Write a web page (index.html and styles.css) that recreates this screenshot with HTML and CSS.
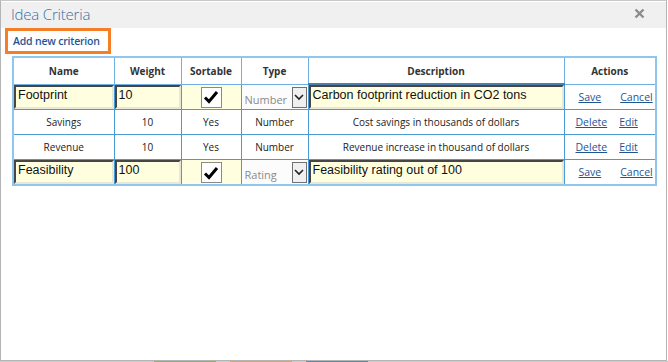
FILE: index.html
```html
<!DOCTYPE html>
<html>

<head>
  <title>Idea Criteria</title>
  <link rel="stylesheet" href="styles.css">
</head>

<body>
  <div class="dialog">
    <div class="titlebar">
      <span class="title">Idea Criteria</span>
      <span class="close"><svg width="11" height="11" viewBox="0 0 11 11"><path d="M1.5 1.5 L9.5 9.5 M9.5 1.5 L1.5 9.5" stroke="#8c8c8c" stroke-width="2.4"/></svg></span>
    </div>
    <div class="content">
      <a class="addnew" href="#">Add new criterion</a>
      <table class="criteria">
        <colgroup>
          <col style="width: 101px">
          <col style="width: 67px">
          <col style="width: 60px">
          <col style="width: 67px">
          <col style="width: 256px">
          <col style="width: 92px">
        </colgroup>
        <tr>
          <th>Name</th>
          <th>Weight</th>
          <th>Sortable</th>
          <th>Type</th>
          <th>Description</th>
          <th>Actions</th>
        </tr>
        <tr class="edit">
          <td><div class="field">Footprint</div></td>
          <td><div class="field">10</div></td>
          <td class="yellow"><span class="check"><svg width="16" height="14" viewBox="0 0 16 14"><path d="M2 7.5 L6 11.5 L14 2" fill="none" stroke="#000" stroke-width="3"/></svg></span></td>
          <td><div class="select"><span>Number</span><span class="drop"><svg width="10" height="7" viewBox="0 0 10 7"><path d="M1 1 L5 5 L9 1" fill="none" stroke="#222" stroke-width="1.6"/></svg></span></div></td>
          <td><div class="field">Carbon footprint reduction in CO2 tons</div></td>
          <td class="actions"><a href="#">Save</a><a href="#">Cancel</a></td>
        </tr>
        <tr>
          <td>Savings</td>
          <td>10</td>
          <td>Yes</td>
          <td>Number</td>
          <td>Cost savings in thousands of dollars</td>
          <td class="actions"><a href="#">Delete</a><a href="#">Edit</a></td>
        </tr>
        <tr>
          <td>Revenue</td>
          <td>10</td>
          <td>Yes</td>
          <td>Number</td>
          <td>Revenue increase in thousand of dollars</td>
          <td class="actions"><a href="#">Delete</a><a href="#">Edit</a></td>
        </tr>
        <tr class="edit">
          <td><div class="field">Feasibility</div></td>
          <td><div class="field">100</div></td>
          <td class="yellow"><span class="check"><svg width="16" height="14" viewBox="0 0 16 14"><path d="M2 7.5 L6 11.5 L14 2" fill="none" stroke="#000" stroke-width="3"/></svg></span></td>
          <td><div class="select"><span>Rating</span><span class="drop"><svg width="10" height="7" viewBox="0 0 10 7"><path d="M1 1 L5 5 L9 1" fill="none" stroke="#222" stroke-width="1.6"/></svg></span></div></td>
          <td><div class="field">Feasibility rating out of 100</div></td>
          <td class="actions"><a href="#">Save</a><a href="#">Cancel</a></td>
        </tr>
      </table>
    </div>
  </div>
  <div class="taskbar">
    <span class="tab green"></span>
    <span class="tab orange"></span>
    <span class="tab blue"></span>
  </div>
</body>

</html>
```

FILE: styles.css
```css
body {
  margin: 0;
  background-color: #ffffff;
  font-family: "Open Sans", "Noto Sans", sans-serif;
}

.dialog {
  width: 665px;
  height: 359px;
  border: 1px solid #b4b4b4;
  border-top-color: #c8c8c8;
  display: flex;
  flex-direction: column;
}

.titlebar {
  height: 26px;
  margin-top: 1px;
  background-color: #f0f0f0;
  display: flex;
  align-items: center;
  justify-content: space-between;
  padding: 0 21px 0 10px;
}

.title {
  font-size: 15px;
  color: #3a6ea5;
  font-weight: 300;
  letter-spacing: -0.2px;
  margin-top: -3px;
}

.close {
  display: flex;
  margin-top: -4px;
}

.content {
  display: flex;
  flex-direction: column;
  align-items: flex-start;
  padding-left: 4px;
}

.addnew {
  display: block;
  width: 95px;
  height: 20px;
  line-height: 20px;
  border: 3px solid #f57e26;
  padding-left: 5px;
  font-size: 10.5px;
  font-weight: 600;
  color: #1f5595;
  text-decoration: none;
  letter-spacing: -0.2px;
  white-space: nowrap;
}

.criteria {
  margin: 2px 0 0 7px;
  border-collapse: collapse;
  table-layout: fixed;
  width: 643px;
  border: 2px solid #8ec6ec;
  font-size: 10px;
  color: #222;
}

.criteria th,
.criteria td {
  border: 1px solid #4a9ad6;
  height: 24px;
  padding: 0;
  text-align: center;
  white-space: nowrap;
  overflow: hidden;
}

.criteria th {
  height: 25px;
  font-weight: 700;
  color: #333;
  border-color: #6fb0e2;
}

.criteria th:nth-child(5) {
  border-bottom: 2px solid #4a7fae;
}

.edit td {
  vertical-align: top;
}

.field {
  height: 20px;
  border: 2px inset #9a9a9a;
  border-right-color: #e8e8d8;
  border-bottom-color: #e8e8d8;
  background-color: #ffffe0;
  font-family: "Liberation Sans", Arial, sans-serif;
  font-size: 12.5px;
  text-align: left;
  padding-left: 2px;
  line-height: 16px;
  color: #111;
}

.yellow {
  background-color: #ffffe0;
}

.check {
  display: inline-flex;
  align-items: center;
  justify-content: center;
  width: 21px;
  height: 21px;
  margin-top: 2px;
  background-color: #fff;
  border: 1px solid #8a8a8a;
  box-sizing: border-box;
}

.select {
  display: flex;
  justify-content: space-between;
  align-items: flex-end;
  height: 24px;
  background-color: #fcfcfc;
  color: #8a8a8a;
  font-size: 11px;
  padding: 0 1px 0 3px;
}

.select span:first-child {
  padding-bottom: 2px;
}

.drop {
  display: flex;
  align-items: center;
  justify-content: center;
  width: 15px;
  height: 21px;
  margin-bottom: 1px;
  background-color: #f0f0f0;
  border: 1px solid #707070;
  box-sizing: border-box;
}

.criteria .actions {
  text-align: left;
  padding-left: 11px;
}

.criteria .edit .actions {
  vertical-align: middle;
  padding-left: 14px;
}

.actions a {
  color: #1f5595;
  text-decoration: underline;
  font-size: 10.5px;
  margin-right: 12px;
}

.edit .actions a {
  margin-right: 19px;
}

.taskbar {
  height: 1px;
  background-color: #cccccc;
  position: relative;
}

.tab {
  position: absolute;
  top: 0;
  height: 1px;
  width: 62px;
}

.green {
  left: 154px;
  background-color: #8fb06a;
}

.orange {
  left: 230px;
  background-color: #e8a060;
}

.blue {
  left: 306px;
  background-color: #4a90c0;
}
```
